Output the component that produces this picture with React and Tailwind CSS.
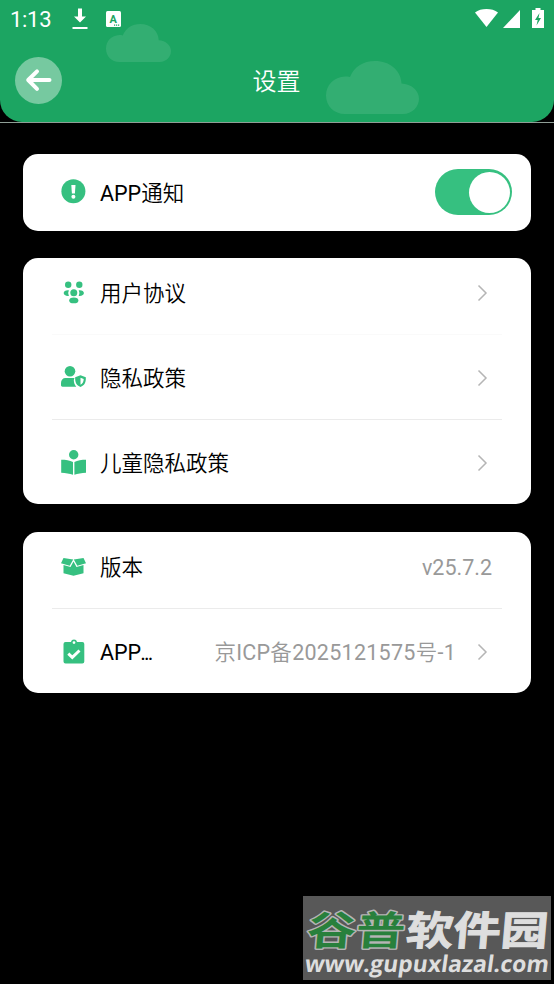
import React from "react";

const GREEN = "#36c080";

function Cloud({ className }) {
  return (
    <svg className={className} viewBox="0 0 93 53" preserveAspectRatio="none" fill="#fff" fillOpacity="0.1">
      <path d="M19 53C8 53 0 45 0 34.5S8 16 19 15.5c2 0 3.500 0 5 .5C28 6 37 0 49 0c15 0 26 9.500 26.500 22.500 10 .5 17.500 7 17.500 15.200S86 53 77 53z" />
    </svg>
  );
}

function StatusBar() {
  return (
    <div className="flex h-[38px] items-center pr-2.5 pl-2.5 text-white">
      <span className="w-[62px] pt-px text-[22px] leading-[38px] font-normal tracking-[-0.3px]">1:13</span>
      <svg className="h-[22px] w-4" viewBox="0 0 16 22" fill="#fff">
        <path d="M6 .5h4v8h4l-6 6-6-6h4zM.5 19h15V21H.5z" />
      </svg>
      <svg className="ml-[18px] h-4 w-[15px]" viewBox="0 0 15 16">
        <rect width="15" height="16" rx="1.500" fill="#fff" />
        <text x="7.300" y="11.800" textAnchor="middle" fontSize="11" fontWeight="700" fontFamily="Roboto" fill="#1ca562">A</text>
        <path d="M8 13.500h1.200v1.200H8zM10 13.500h1.200v1.200H10zM12 13.500h1.200v1.200H12z" fill="#1ca562" />
      </svg>
      <div className="grow" />
      <svg className="mb-0.5 h-[18px] w-[23px]" viewBox="0 0 23 18" fill="#fff">
        <path d="M0 3.500C6-1.100 17-1.100 23 3.500L11.500 18z" />
      </svg>
      <svg className="ml-[5px] h-[18px] w-[17px]" viewBox="0 0 17 18" fill="#fff">
        <path d="M17 0v18H0z" />
      </svg>
      <svg className="mb-0.5 ml-3 h-5 w-3" viewBox="0 0 12 20" fill="#fff">
        <path d="M3.500 0h5v2H12v18H0V2h3.500z" />
        <path d="M7.500 5L3 12h2.700L4.500 17.500 9 10H6.500z" fill="#1ca562" />
      </svg>
    </div>
  );
}

function NoticeIcon() {
  return (
    <svg className="mb-[3px] size-[25px]" viewBox="0 0 25 25">
      <circle cx="12.400" cy="12.300" r="12" fill={GREEN} />
      <path d="M10.300 6h4.200l-.6 8.500h-3z" fill="#fff" />
      <circle cx="12.400" cy="17.700" r="2" fill="#fff" />
    </svg>
  );
}

function GroupIcon() {
  return (
    <svg className="size-[25px]" viewBox="0 0 25 25" fill={GREEN}>
      <circle cx="7.200" cy="4.700" r="3.200" />
      <circle cx="18.300" cy="4.700" r="3.200" />
      <path d="M7.900 10.300a6 6 0 0 0 0 5.600C4.900 16.200 2.700 15.100 2.700 13.100s2.200-3.200 5.200-2.800zM17.700 10.300a6 6 0 0 1 0 5.600c3 .3 5.200-.8 5.200-2.800s-2.200-3.200-5.200-2.800z" />
      <circle cx="12.800" cy="12.800" r="3.500" />
      <ellipse cx="12.800" cy="20.400" rx="4.600" ry="2.900" />
    </svg>
  );
}

function PrivacyIcon() {
  return (
    <svg className="size-[25px]" viewBox="0 0 25 25" fill={GREEN}>
      <circle cx="9" cy="6.300" r="5.300" />
      <path d="M4.500 13h9l-.7 2c.1 3 .8 5 2.500 6.700H1.500C.6 21.700 0 21.200 0 20.300V18c0-3 1.800-5 4.500-5z" />
      <path fillRule="evenodd" d="M19.500 10.300l5.300 2c.3 4.700-1 8-5.300 9.700-4.300-1.700-5.600-5-5.300-9.700zm0 2.500v7c2.200-1.200 3.200-3 3.200-5.700z" />
    </svg>
  );
}

function ReaderIcon() {
  return (
    <svg className="mb-px size-[25px]" viewBox="0 0 25 25" fill={GREEN}>
      <circle cx="12.700" cy="4.700" r="4.700" />
      <path d="M.2 9.700c4.500 0 8.500.6 11.800 2.300V24.700C8.700 23.500 4.700 22.900.2 22.700zM25 9.700c-4.300 0-8.400.6-11.600 2.300V24.700c3.200-1.200 7.300-1.800 11.600-2z" />
    </svg>
  );
}

function BoxIcon() {
  return (
    <svg className="size-[25px]" viewBox="0 0 25 25" fill={GREEN}>
      <path d="M2.500 3l9.700 1.400-3.500 6.300L0 8.300zM22.500 3l-9.700 1.400 3.500 6.300L25 8.300z" />
      <path d="M2.500 10l7 1.900 3-5.300 3 5.300 7-1.900v8.300l-10 2.500-10-2.500z" />
    </svg>
  );
}

function ClipboardIcon() {
  return (
    <svg className="mb-px size-[25px]" viewBox="0 0 25 25">
      <path fillRule="evenodd" d="M4.500 3h5.400a3.200 3.200 0 0 1 6.200 0h5.200a2 2 0 0 1 2 2v17.500a2 2 0 0 1-2 2H4.500a2 2 0 0 1-2-2V5a2 2 0 0 1 2-2zm8.500-.8a1.400 1.400 0 1 0 0 2.800 1.400 1.400 0 0 0 0-2.800z" fill={GREEN} />
      <path d="M7.300 14.600l4 3.800 7.200-6.900" fill="none" stroke="#fff" strokeWidth="2.900" />
    </svg>
  );
}

function Chevron() {
  return (
    <svg className="mr-3.5 ml-[21px] h-[18px] w-[11px] shrink-0" viewBox="0 0 11 18" fill="none" stroke="#b5b5b5" strokeWidth="1.500">
      <path d="M1.500 1.500L9 9l-7.500 7.500" />
    </svg>
  );
}

function Row({ icon, label, value, arrow, className }) {
  return (
    <div className={"mx-[29px] flex items-center " + className}>
      <span className="ml-[9px] w-[39px] shrink-0">{icon}</span>
      <span className="pt-0.5 whitespace-nowrap text-black">{label}</span>
      <span className={"grow pt-0.5 text-right whitespace-nowrap text-[#999] " + (arrow ? "tracking-[0.27px]" : "pr-2.5")}>{value}</span>
      {arrow && <Chevron />}
    </div>
  );
}

export default function App() {
  return (
    <div className="relative flex h-[984px] w-[554px] flex-col overflow-hidden bg-black font-['Roboto','Noto_Sans_CJK_SC_DemiLight','Noto_Sans_CJK_SC_Light','Noto_Sans_CJK_SC',sans-serif] text-[21.5px] leading-[30px]">
      <div className="border-b border-[#8f9e96]">
        <header className="relative h-[122px] overflow-hidden rounded-b-[22px] bg-[#1ca562]">
          <Cloud className="absolute top-6 left-[106px] h-[38px] w-[65px]" />
          <Cloud className="absolute top-[61px] left-[326px] h-[53px] w-[93px]" />
          <StatusBar />
          <div className="mt-[19px] flex h-[46px] items-center px-[15px]">
            <button className="flex size-[47px] shrink-0 items-center justify-center rounded-full bg-white/40">
              <svg className="size-[27px]" viewBox="0 0 27 27" fill="none" stroke="#fff" strokeWidth="4" strokeLinecap="round" strokeLinejoin="round">
                <path d="M24.500 13H3.500M12 4.300L3.200 13 12 21.800" />
              </svg>
            </button>
            <h1 className="grow pt-[3px] pr-12 text-center text-[24px] text-white">设置</h1>
          </div>
        </header>
      </div>

      <main className="px-[23px] pt-[31px]">
        <section className="flex h-[77px] items-center rounded-[15px] bg-white pr-[19px] pl-[38px]">
          <span className="w-[39px]"><NoticeIcon /></span>
          <span className="grow pt-0.5 text-black">APP通知</span>
          <div className="mb-px flex h-[45.5px] w-[77px] items-center justify-end rounded-full bg-[#36c080] pr-[2px]">
            <div className="size-[41px] rounded-full bg-white" />
          </div>
        </section>

        <section className="mt-[27px] h-[246px] rounded-[15px] bg-white">
          <Row className="h-[77px] border-b border-[#fafafa] pb-[7px]" icon={<GroupIcon />} label="用户协议" arrow />
          <Row className="h-[85px] border-b border-[#ebebeb] pt-px" icon={<PrivacyIcon />} label="隐私政策" arrow />
          <Row className="h-[84px] pt-px" icon={<ReaderIcon />} label="儿童隐私政策" arrow />
        </section>

        <section className="mt-7 h-[161px] rounded-[15px] bg-white">
          <Row className="h-[77px] border-b border-[#ebebeb] pb-[6px]" icon={<BoxIcon />} label="版本" value="v25.7.2" />
          <Row className="h-[84px] pt-px" icon={<ClipboardIcon />} label={<>APP<span className="-ml-px tracking-[-1.9px]">...</span></>} value="京ICP备2025121575号-1" arrow />
        </section>
      </main>

      <div className="absolute top-[896px] left-[303px] h-[84px] w-[248px] bg-[#585858]">
        <svg className="block h-full w-full overflow-visible" viewBox="0 0 248 84">
          <g fontFamily="'Noto Sans CJK SC', sans-serif" fontWeight="700" fontSize="43">
            <g transform="translate(3 49) skewX(-5) scale(1 .93)">
              <text x="0" y="0" textLength="98" lengthAdjust="spacingAndGlyphs" fill="#28803c" stroke="#b5b5b5" strokeWidth="3" strokeLinejoin="round" paintOrder="stroke">谷普</text>
              <text x="99" y="0" textLength="142" lengthAdjust="spacingAndGlyphs" fill="#dedede" stroke="#dedede" strokeWidth="1">软件园</text>
            </g>
          </g>
          <g transform="translate(1 76) skewX(-8)">
            <text x="0" y="0" textLength="244" lengthAdjust="spacingAndGlyphs" fontFamily="'Open Sans', sans-serif" fontWeight="700" fontSize="23" fill="#dedede">www.gupuxlazal.com</text>
          </g>
        </svg>
      </div>
    </div>
  );
}
